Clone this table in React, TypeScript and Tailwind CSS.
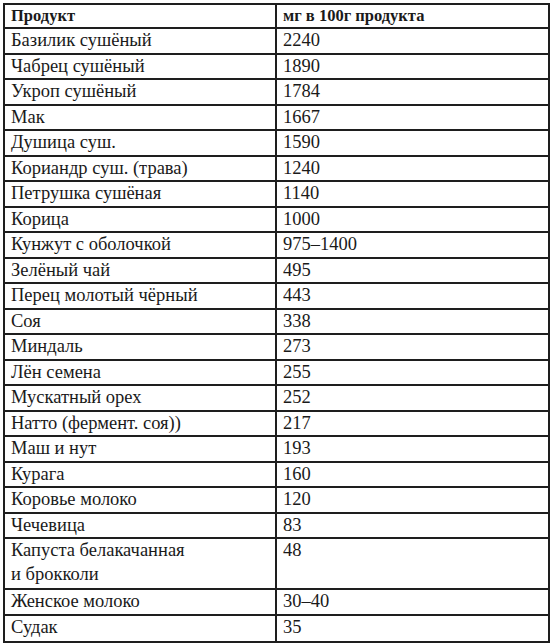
import React from "react";

const rows: [string, string][] = [
  ["Базилик сушёный", "2240"],
  ["Чабрец сушёный", "1890"],
  ["Укроп сушёный", "1784"],
  ["Мак", "1667"],
  ["Душица суш.", "1590"],
  ["Кориандр суш. (трава)", "1240"],
  ["Петрушка сушёная", "1140"],
  ["Корица", "1000"],
  ["Кунжут с оболочкой", "975–1400"],
  ["Зелёный чай", "495"],
  ["Перец молотый чёрный", "443"],
  ["Соя", "338"],
  ["Миндаль", "273"],
  ["Лён семена", "255"],
  ["Мускатный орех", "252"],
  ["Натто (фермент. соя))", "217"],
  ["Маш и нут", "193"],
  ["Курага", "160"],
  ["Коровье молоко", "120"],
  ["Чечевица", "83"],
];

function Row({ a, b, last }: { a: React.ReactNode; b: string; last?: boolean }) {
  return (
    <div
      className={
        "flex h-[25.5px] text-[18.5px] leading-[20px] " +
        (last ? "" : "border-b-2 border-[#1e1e1e]")
      }
    >
      <div className="w-[272px] shrink-0 border-r-2 border-[#1e1e1e] pl-[6px] pt-[1px] whitespace-nowrap">{a}</div>
      <div className="flex-1 pl-[6px] pt-[1px] whitespace-nowrap">{b}</div>
    </div>
  );
}

export default function App() {
  return (
    <div className="w-[553px] h-[643px] bg-white pl-[3px] pt-[3px] text-[#1a1a1a] font-['Liberation_Serif',serif]">
      <div className="w-[547px] border-2 border-[#1e1e1e]">
        <div className="flex h-[24px] border-b-2 border-[#1e1e1e] text-[16.5px] font-bold leading-[20px]">
          <div className="w-[272px] shrink-0 border-r-2 border-[#1e1e1e] pl-[6px] pt-[1px]">Продукт</div>
          <div className="flex-1 pl-[6px] pt-[1px]">мг в 100г продукта</div>
        </div>
        {rows.map(([a, b]) => (
          <Row key={a} a={a} b={b} />
        ))}
        <div className="flex h-[51px] text-[18.5px] leading-[24px] border-b-2 border-[#1e1e1e]">
          <div className="w-[272px] shrink-0 border-r-2 border-[#1e1e1e] pl-[6px]">
            <div className="-mt-[1px]">
              Капуста белакачанная
              <br />и брокколи
            </div>
          </div>
          <div className="flex-1 pl-[6px] pt-[1px] leading-[20px]">48</div>
        </div>
        <Row a="Женское молоко" b="30–40" />
        <Row a="Судак" b="35" last />
      </div>
    </div>
  );
}
